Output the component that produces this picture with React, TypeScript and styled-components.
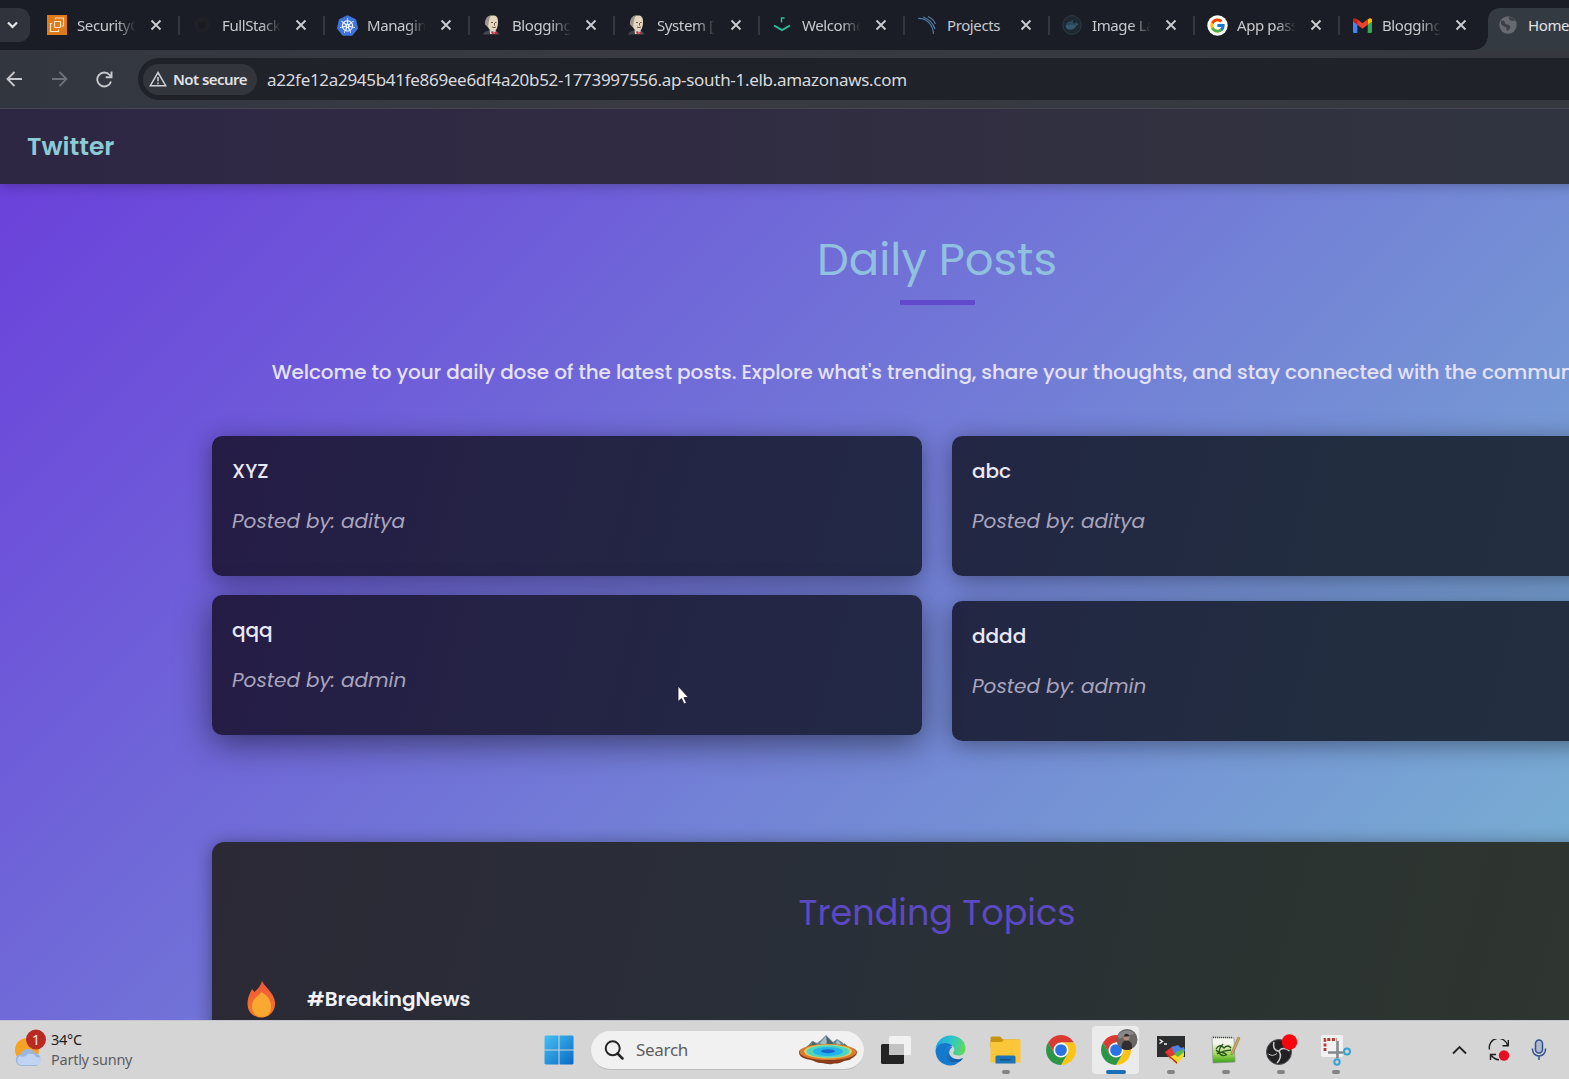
import React from 'react';
import styled, { createGlobalStyle, css } from 'styled-components';
import { FcGoogle } from 'react-icons/fc';
import { SiKubernetes, SiDocker } from 'react-icons/si';

const brandFont = `Poppins, Inter, "Noto Sans", sans-serif`;
const uiFont = `"Segoe UI", "Noto Sans", "Open Sans", sans-serif`;

const Global = createGlobalStyle`
  * { box-sizing: border-box; }
  html, body { margin: 0; padding: 0; overflow: hidden; background: #1a1d24; }
  svg { display: block; flex: none; }
`;

const Screen = styled.div`
  width: 1569px;
  height: 1079px;
  display: flex;
  flex-direction: column;
  overflow: hidden;
  position: relative;
  font-family: ${uiFont};
`;

/* ---------- browser chrome ---------- */

const TabStrip = styled.div`
  height: 50px;
  flex: none;
  display: flex;
  background: #1a1d25;
  padding-top: 8px;
`;

const TabSearch = styled.div`
  width: 30px;
  height: 34px;
  margin-right: 5px;
  padding-right: 5px;
  border-radius: 0 11px 11px 0;
  background: #30333b;
  display: flex;
  align-items: center;
  justify-content: center;
  flex: none;
`;

const Tab = styled.div<{ $active?: boolean }>`
  width: 145px;
  height: 34px;
  flex: none;
  display: flex;
  align-items: center;
  padding-left: 11px;
  font-size: 15px;
  letter-spacing: -0.4px;
  color: #c9cacd;
  ${(p) =>
    p.$active &&
    css`
      position: relative;
      height: 42px;
      width: 150px;
      margin-left: 3px;
      padding: 0 0 8px 9px;
      border-radius: 12px 0 0 0;
      background: #343a42;
      color: #e2e3e5;
      &::before {
        content: '';
        position: absolute;
        left: -14px;
        bottom: 0;
        width: 14px;
        height: 14px;
        background: radial-gradient(circle at 0 0, transparent 13.5px, #343a42 14px);
      }
    `}
`;

const TabIcon = styled.div`
  width: 22px;
  height: 22px;
  margin-right: 9px;
  display: flex;
  align-items: center;
  justify-content: center;
  flex: none;
`;

const TabLabel = styled.div<{ $fade?: boolean }>`
  width: 58px;
  height: 26px;
  line-height: 26px;
  overflow: hidden;
  white-space: nowrap;
  ${(p) =>
    p.$fade &&
    css`
      mask-image: linear-gradient(90deg, #000 68%, transparent 102%);
    `}
`;

const TabClose = styled.div`
  margin-left: 15px;
  width: 12px;
`;

const TabDivider = styled.div`
  width: 2px;
  height: 19px;
  margin-left: auto;
  background: #34373e;
`;

const Toolbar = styled.div`
  height: 59px;
  flex: none;
  display: flex;
  align-items: center;
  background: linear-gradient(90deg, #32373f, #393a42 40%, #35383f);
  border-bottom: 1px solid #47454f;
`;

const NavIcons = styled.div`
  width: 138px;
  padding: 0 25px 0 6px;
  display: flex;
  justify-content: space-between;
  align-items: center;
`;

const AddressBar = styled.div`
  flex: 1;
  height: 42px;
  display: flex;
  align-items: center;
  padding-left: 5px;
  border-radius: 21px 0 0 21px;
  background: #1f2229;
`;

const SecurityChip = styled.div`
  width: 114px;
  height: 31px;
  border-radius: 16px;
  background: #32353c;
  display: flex;
  align-items: center;
  padding-left: 6px;
  gap: 6px;
  color: #e0e1e4;
  font-size: 15px;
  font-weight: 600;
  letter-spacing: -0.55px;
  white-space: nowrap;
`;

const Url = styled.div`
  margin-left: 10px;
  color: #d9dadd;
  font-size: 17px;
  letter-spacing: -0.3px;
  white-space: nowrap;
`;

/* ---------- site ---------- */

const Viewport = styled.div`
  flex: 1;
  min-height: 0;
  overflow: hidden;
  font-family: ${brandFont};
`;

const Site = styled.div`
  width: 1874px;
  height: 911px;
  display: flex;
  flex-direction: column;
`;

const SiteHeader = styled.header`
  height: 75px;
  flex: none;
  display: flex;
  align-items: center;
  padding-left: 27px;
  background: linear-gradient(90deg, #2e2744, #302a43 30%, #31313f 65%, #303843);
  color: #8ccbd5;
  font-size: 25px;
  font-weight: 600;
  box-shadow: 0 2px 12px rgba(0, 0, 0, 0.25);
  z-index: 1;
`;

const Content = styled.main`
  flex: 1;
  min-height: 0;
  display: flex;
  flex-direction: column;
  align-items: center;
  overflow: hidden;
  background: linear-gradient(135deg, #6b41db, #7bc4d1);
`;

const PageTitle = styled.h1`
  margin: 48px 0 0;
  height: 56px;
  flex: none;
  line-height: 56px;
  font-size: 45px;
  font-weight: 400;
  color: #91c1df;
`;

const TitleRule = styled.div`
  margin-top: 12px;
  width: 75px;
  height: 5px;
  flex: none;
  border-radius: 1px;
  background: #6149cb;
`;

const Intro = styled.p`
  margin: 52px 0 0;
  height: 30px;
  flex: none;
  line-height: 30px;
  font-size: 20px;
  font-weight: 500;
  letter-spacing: -0.11px;
  color: #e5e2fa;
  white-space: nowrap;
`;

const PostGrid = styled.div`
  margin-top: 49px;
  width: 1450px;
  flex: none;
  display: grid;
  grid-template-columns: 1fr 1fr;
  gap: 25px 30px;
`;

const PostCard = styled.article<{ $side: 'left' | 'right'; $raised?: boolean }>`
  height: 140px;
  padding: 20px;
  border-radius: 10px;
  background: ${(p) =>
    p.$side === 'left'
      ? 'linear-gradient(105deg, #251c46, #242345 45%, #222945)'
      : 'linear-gradient(105deg, #222644, #222c40 45%, #233040)'};
  box-shadow: 0 4px 25px rgba(0, 0, 0, 0.4);
  ${(p) =>
    p.$raised &&
    css`
      transform: translateY(-6px);
      box-shadow: 0 8px 34px rgba(0, 0, 0, 0.5);
    `}
`;

const PostTitle = styled.h3`
  margin: 0;
  height: 30px;
  line-height: 30px;
  font-size: 20px;
  font-weight: 500;
  color: #ebe8f6;
`;

const PostAuthor = styled.p`
  margin: 20px 0 0;
  height: 30px;
  line-height: 30px;
  font-size: 20px;
  font-style: italic;
  color: #a9a5bd;
`;

const TrendingPanel = styled.section`
  margin-top: 101px;
  width: 1450px;
  height: 300px;
  flex: none;
  padding: 46px 35px;
  border-radius: 12px;
  background: linear-gradient(105deg, #2b2935, #292f38 42%, #2b3331 70%, #303630);
  box-shadow: 0 2px 18px rgba(0, 0, 0, 0.4);
`;

const TrendingTitle = styled.h2`
  margin: 0;
  height: 50px;
  line-height: 50px;
  text-align: center;
  font-size: 35px;
  font-weight: 400;
  color: #5b49c4;
`;

const TrendingRow = styled.div`
  margin-top: 41px;
  height: 40px;
  display: flex;
  align-items: center;
  gap: 30px;
  font-size: 20px;
  font-weight: 600;
  color: #f1f1f6;
`;

const Pointer = styled.div`
  position: absolute;
  left: 677px;
  top: 685px;
`;

/* ---------- taskbar ---------- */

const Taskbar = styled.footer`
  height: 59px;
  flex: none;
  display: flex;
  align-items: center;
  background: #d5d5d6;
  border-top: 1px solid #c4c6ce;
`;

const Weather = styled.div`
  width: 531px;
  display: flex;
  align-items: center;
  padding: 0 0 2px 13px;
  gap: 4px;
`;

const WeatherText = styled.div`
  display: flex;
  flex-direction: column;
  font-size: 14.5px;
  line-height: 20px;
  letter-spacing: -0.25px;
  color: #1d1d1f;
`;

const Muted = styled.span`
  color: #5c5c5f;
`;

const Slot = styled.div<{ $state?: 'open' | 'active' }>`
  position: relative;
  width: 55px;
  height: 48px;
  display: flex;
  align-items: center;
  justify-content: center;
  flex: none;
  ${(p) =>
    p.$state === 'active' &&
    css`
      width: 47px;
      margin: 0 4px;
      background: #ebebec;
      border-radius: 4px;
    `}
  ${(p) =>
    p.$state &&
    css`
      &::after {
        content: '';
        position: absolute;
        bottom: 0;
        width: ${p.$state === 'active' ? 20 : 8}px;
        height: 4px;
        border-radius: 2px;
        background: ${p.$state === 'active' ? '#1b6fb8' : '#828384'};
      }
    `}
`;

const SearchBox = styled.div`
  width: 273px;
  height: 39px;
  margin: 0 4px 0 5px;
  border-radius: 20px;
  background: #f1f1f1;
  border-bottom: 1px solid #bcbcbd;
  display: flex;
  align-items: center;
  padding: 0 6px 0 13px;
  font-size: 17px;
  letter-spacing: -0.3px;
  color: #5e5e60;
  gap: 12px;
`;

const Grow = styled.span`
  flex: 1;
`;

const Tray = styled.div`
  margin-left: auto;
  width: 130px;
  display: flex;
  align-items: center;
  gap: 21px;
  padding-left: 13px;
`;

/* ---------- icons ---------- */

const AwsIcon = () => (
  <svg width="20" height="20" viewBox="0 0 20 20">
    <rect width="20" height="20" fill="#df7a18" />
    <g fill="none" stroke="#fbe3c4" strokeWidth="1.2">
      <rect x="7.5" y="6.5" width="6" height="6" rx="0.8" />
      <path d="M8.5 4.5V3h8v8h-2M5 8.500H3.500V16.500H11.500V14.500" />
    </g>
  </svg>
);

const GithubDim = () => (
  <svg width="20" height="20" viewBox="0 0 20 20">
    <circle cx="10" cy="10" r="8" fill="#1e2026" />
    <path d="M6 6l2 1h4l2-1v6c0 2-8 2-8 0z" fill="#191b21" />
  </svg>
);

const JenkinsIcon = () => (
  <svg width="20" height="22" viewBox="0 0 20 22">
    <path d="M1 20.500c1-3 4-4 8-4s8 1 8.500 4z" fill="#45424c" />
    <path d="M5 8c0-5 2.500-6.500 6-6.500S16 3 16 8c0 5.500-2 9.500-5 9.500S5 13 5 8z" fill="#e4d6bd" />
    <path d="M3 10.500C2.500 5 5.500 1.500 9.500 1.300 7 4 7.500 6 6.500 9L6 13.500z" fill="#9c968e" />
    <path d="M9 8.500h2M13 8.500h1.500M10 13q2 1.200 4 0M12.500 9v2.500" stroke="#5d4c43" strokeWidth="0.900" fill="none" />
    <path d="M7.500 15.500l3 2.500 3.500-2-1 4H8z" fill="#d8d3cf" />
    <path d="M9 17.500l3 1 3-1v3l-3-1-2 1z" fill="#b93049" />
  </svg>
);

const WelcomeIcon = () => (
  <svg width="20" height="20" viewBox="0 0 20 20" fill="none" stroke="#2bbf9b" strokeWidth="2">
    <path d="M2 10.500l8 4.500 8-4.500" />
    <path d="M9.500 7.500V3H12.500" strokeWidth="1.500" />
  </svg>
);

const SonarIcon = () => (
  <svg width="20" height="20" viewBox="0 0 20 20" fill="none" stroke="#4e7ba1" strokeWidth="1.2">
    <path d="M1 3.500C10 3 16 10 16.500 19M6 2C12 4 16 8 18 14M11 1.500c3 1.500 6 4 7.500 7.500" />
  </svg>
);

const DockerDim = () => (
  <svg width="20" height="20" viewBox="0 0 20 20">
    <circle cx="10" cy="10" r="9.300" fill="#1d2831" stroke="#293e4b" />
    <g color="#36586d" transform="translate(3.500 3.500)">
      <SiDocker size={13} />
    </g>
  </svg>
);

const GoogleIcon = () => (
  <svg width="21" height="21" viewBox="0 0 21 21">
    <circle cx="10.500" cy="10.500" r="10.200" fill="#fff" />
    <g transform="translate(2 2)">
      <FcGoogle size={17} />
    </g>
  </svg>
);

const GmailIcon = () => (
  <svg width="19" height="15" viewBox="0 0 19 15">
    <path d="M0 2.500L4.300 5.500V15H1.300A1.300 1.300 0 0 1 0 13.700z" fill="#4285f4" />
    <path d="M19 2.500L14.700 5.500V15h3a1.300 1.300 0 0 0 1.300-1.300z" fill="#34a853" />
    <path d="M14.700 1.200L17 .2c1-.3 2 .5 2 1.800v1.500l-4.300 3.300z" fill="#fbbc04" />
    <path d="M4.300 1.200L2 .2C1 0 0 .7 0 2v1.500l4.300 3.300z" fill="#c5221f" />
    <path d="M4.300 6.800V1.200L9.500 5.200l5.200-4v5.600L9.500 10.700z" fill="#ea4335" />
  </svg>
);

const GlobeIcon = () => (
  <svg width="20" height="20" viewBox="0 0 20 20">
    <circle cx="10" cy="10" r="8.700" fill="#666a70" />
    <path d="M3 6c3-1 4 0 4 2s4 1 5 3-1 4-3 5l-1-4c-2 0-4-2-5-3zM11 2c-1 3 2 4 6 4l-2-3z" fill="#3b4047" />
  </svg>
);

const K8sIcon = () => (
  <svg width="21" height="21" viewBox="0 0 21 21">
    <circle cx="10.500" cy="10.500" r="8" fill="#f2f5fd" />
    <g color="#3f74dc">
      <SiKubernetes size={21} />
    </g>
  </svg>
);

const CloseGlyph = () => (
  <svg width="12" height="12" viewBox="0 0 12 12" stroke="#c9cbcf" strokeWidth="1.900">
    <path d="M1.500 1.500l9 9M10.500 1.500l-9 9" />
  </svg>
);

const Arrow = ({ color, flip }: { color: string; flip?: boolean }) => (
  <svg width="17" height="16" viewBox="0 0 17 16" fill="none" stroke={color} strokeWidth="1.800">
    <path d={flip ? 'M1 8h14M8.500 1l7 7-7 7' : 'M16 8H2M8.500 1l-7 7 7 7'} />
  </svg>
);

const Reload = () => (
  <svg width="17" height="17" viewBox="0 0 17 17" fill="none" stroke="#c6c8cc" strokeWidth="1.900">
    <path d="M15 10.500A7 7 0 1 1 13.700 4L15.500 6" />
    <path d="M15.500 .5V6.300H9.700" />
  </svg>
);

const Warning = () => (
  <svg width="18" height="16" viewBox="0 0 18 16" fill="none" stroke="#d0d2d6" strokeWidth="1.500">
    <path d="M9 1.500L16.700 14.700H1.300z" />
    <path d="M9 6v4.300M9 11.500v1.700" />
  </svg>
);

const Flame = () => (
  <svg width="30" height="38" viewBox="0 0 30 38">
    <defs>
      <linearGradient id="flame" x1="0" y1="0" x2="0" y2="1">
        <stop offset="0" stopColor="#f0553a" />
        <stop offset="1" stopColor="#f47b26" />
      </linearGradient>
    </defs>
    <path d="M15 .5c1 5 12.500 12 13 22C28.500 32 21.500 37.500 14.500 37.500S.5 33 .5 23.500c0-5 1.500-9 4.500-14.500l2.500 3C10.500 9 14 6 15 .5z" fill="url(#flame)" />
    <path d="M14.500 12c5 3 9.500 7 9.500 14.500S20 37 14.500 37 5 33 5 26s5.500-9 9.500-14z" fill="#f9a832" />
  </svg>
);

const WeatherIcon = () => (
  <svg width="34" height="40" viewBox="0 0 34 40">
    <circle cx="14" cy="21" r="12" fill="#f5a325" />
    <path d="M8 37a6 6 0 0 1-.5-11.800A8 8 0 0 1 22 24a6.700 6.700 0 0 1 1 13z" fill="#9db6de" />
    <path d="M7 36a5 5 0 0 1 0-9q5 2 8-2 6-1 8 3 4 0 6 3-1 5-6 5z" fill="#c0d3f1" />
    <circle cx="23" cy="10.500" r="10" fill="#b92a24" />
    <text x="23" y="15.500" textAnchor="middle" fontSize="14" fill="#f8e4e2" fontFamily="Noto Sans, sans-serif">1</text>
  </svg>
);

const StartIcon = () => (
  <svg width="30" height="30" viewBox="0 0 30 30">
    <defs>
      <linearGradient id="win" x1="0" y1="0" x2="1" y2="1">
        <stop offset="0" stopColor="#45c1f3" />
        <stop offset="1" stopColor="#0a69c3" />
      </linearGradient>
    </defs>
    <path d="M1.500 .5h13v14h-14V1.500zM15.500 .5h13l1 1v13h-14zM.5 15.500h14v14H1.500l-1-1zM15.500 15.500h14v13l-1 1h-13z" fill="url(#win)" />
  </svg>
);

const SearchIcon = () => (
  <svg width="20" height="20" viewBox="0 0 20 20" fill="none" stroke="#252527" strokeWidth="2">
    <circle cx="8.700" cy="8.300" r="7" />
    <path d="M13.500 13.500l5 5" strokeWidth="2.500" strokeLinecap="round" />
  </svg>
);

const SpringIcon = () => (
  <svg width="60" height="30" viewBox="0 0 60 30">
    <path d="M9 13l5-7 5 2 4-3 5-5 7 7 4-3 5 3 6 7z" fill="#6b8790" />
    <path d="M22 8l6-7 3 5-3 2-1 5zM38 7l2-2 3 4-4 2z" fill="#a5bac2" />
    <path d="M28 1l7 7-2 4-4-4zM15 6l3 3-1 4-4-2z" fill="#47646f" />
    <path d="M8 12l5-4v5zM46 8l6 5h-8z" fill="#5f7d50" />
    <path d="M1 17c0-9 58-9 58 0 0 4-4 5-6 7s-6 1-9 3-7 1-10 2-7-1-11-1-6-2-10-3C6 24 1 22 1 17z" fill="#8a3d1a" />
    <ellipse cx="30" cy="17" rx="28.500" ry="8" fill="#de7a2c" />
    <ellipse cx="30" cy="16.500" rx="24" ry="7" fill="#d8cd6a" />
    <ellipse cx="30" cy="16.500" rx="21.500" ry="6.200" fill="#4fd8bd" />
    <ellipse cx="30" cy="16.500" rx="15" ry="4.500" fill="#25b4ea" />
    <ellipse cx="30" cy="16.200" rx="7" ry="2" fill="#1668cf" />
  </svg>
);

const TaskView = () => (
  <svg width="30" height="30" viewBox="0 0 30 30">
    <rect x="0" y="9" width="23" height="20" rx="1.500" fill="#242425" />
    <rect x="8" y="1" width="22" height="19" rx="1.500" fill="#f1f1f1" />
    <rect x="8" y="9" width="15" height="11" fill="#c3c3c4" />
  </svg>
);

const EdgeIcon = () => (
  <svg width="31" height="31" viewBox="0 0 31 31">
    <defs>
      <linearGradient id="edgeTop" x1="0" y1="0.300" x2="1" y2="0.500">
        <stop offset="0" stopColor="#1fa6e0" />
        <stop offset="0.500" stopColor="#2cc5cb" />
        <stop offset="1" stopColor="#61d95c" />
      </linearGradient>
      <linearGradient id="edgeLow" x1="0" y1="0" x2="1" y2="1">
        <stop offset="0" stopColor="#1b86d6" />
        <stop offset="1" stopColor="#0d4f9c" />
      </linearGradient>
    </defs>
    <path d="M.5 14C1.500 6 8 .5 15.500 .5 24 .5 30.500 6 30.500 13.500c0 4.500-3 7-7 7-3.500 0-5.500-1-5.500-2.500 0-1 1.300-1.500 1.300-3.500 0-3.500-4-6-8.300-6C6 8.500 2 10.500.5 14z" fill="url(#edgeTop)" />
    <path d="M.5 15.500C1 11 5 8 10 8c3.500 0 6 1.200 7.500 3-5 0-7 3.500-7 7 0 6.500 6 11.500 13.500 9-2.500 2.500-5.500 3.500-8.500 3.500C7 30.500.5 24 .5 15.500z" fill="#1479cc" />
    <path d="M14.500 11.200c-4 1-5.500 5.300-4 10 2 6 9 8 14 5.500 1.500-.8 3-2.500 3.700-4-3 2-8 2-11-.2-3.200-2.500-3.700-5.500-2.200-8 .8-1.300 1.700-2 2.500-2.500-1-.7-2-.9-3-.8z" fill="url(#edgeLow)" />
  </svg>
);

const FolderIcon = () => (
  <svg width="31" height="28" viewBox="0 0 31 28">
    <path d="M.5 2A1.500 1.500 0 0 1 2 .5h8l3 3h17v8H.5z" fill="#c9930f" />
    <path d="M.5 6h11l3-2.500h16v23H.5z" fill="#fbc738" />
    <path d="M5.500 27.500V21a1.500 1.500 0 0 1 1.500-1.500h17a1.500 1.500 0 0 1 1.500 1.500v6.500z" fill="#1e72b6" />
    <rect x="10" y="23" width="11" height="1.500" fill="#155588" />
  </svg>
);

const ChromeShape = () => (
  <>
    <path d="M24 12H44.780A24 24 0 0 0 3.215 12L13.608 30z" fill="#da3a31" />
    <path d="M34.390 30L24 48A24 24 0 0 0 44.780 12H24z" fill="#fbc415" />
    <path d="M13.610 30L3.218 12A24 24 0 0 0 24 48L34.390 30z" fill="#2c9548" />
    <circle cx="24" cy="24" r="12" fill="#fff" />
    <circle cx="24" cy="24" r="9.400" fill="#2b72e4" />
  </>
);

const ChromeIcon = () => (
  <svg width="30" height="30" viewBox="0 0 48 48">
    <ChromeShape />
  </svg>
);

const ChromeProfileIcon = () => (
  <svg width="44" height="46" viewBox="0 0 44 46">
    <g transform="translate(7 8) scale(.625)">
      <ChromeShape />
    </g>
    <circle cx="33" cy="12.500" r="10.500" fill="#696664" />
    <path d="M23.500 9c3-6 13-8 17-2l-5 1-2 5-4-3-4 2z" fill="#878887" />
    <path d="M27.500 21.500c0-6 2-8 5-8s6 2 5.500 8c-3 2-7 2-10.500 0z" fill="#302c2f" />
    <circle cx="32.500" cy="10.500" r="3" fill="#b48c7c" />
    <path d="M29.500 9.500q2-5 6-1l-1 1z" fill="#28262a" />
  </svg>
);

const TerminalIcon = () => (
  <svg width="30" height="30" viewBox="0 0 30 30">
    <rect x="1" y="1" width="28" height="21" fill="#2c2d2f" />
    <path d="M3.500 4.500l3 2-3 2M8 9h3" stroke="#f2f2f2" strokeWidth="1.400" fill="none" />
    <path d="M9 17l8-6 3 4-2 6-4 3z" fill="#e5372c" />
    <path d="M16 12l6-2 3 3 3-1 1 4-8 4-4-3z" fill="#4a82e8" />
    <path d="M20 17l8-3v5l-6 5-5-3z" fill="#58b947" />
    <path d="M13 22l6-2 3 2 6-5v4l-7 8z" fill="#f5d929" />
    <path d="M9 17l12 10v2L10 19z" fill="#b6261e" />
  </svg>
);

const NotepadIcon = () => (
  <svg width="30" height="30" viewBox="0 0 30 30">
    <defs>
      <linearGradient id="pad" x1="0" y1="0" x2="0" y2="1">
        <stop offset="0.250" stopColor="#f3f4ee" />
        <stop offset="0.650" stopColor="#a5d85a" />
        <stop offset="1" stopColor="#35a016" />
      </linearGradient>
    </defs>
    <path d="M1 2l22 1 1 24-22 1z" fill="url(#pad)" stroke="#88908a" strokeWidth="0.700" />
    <path d="M2 2.500h20" stroke="#474b49" strokeDasharray="1 1" strokeWidth="1.500" />
    <g fill="none" stroke="#28551e" strokeWidth="1.300">
      <path d="M5 14q4-6 8-1 4-4 7 0M5 15q3 4 8 1l7-1M6 19q5-4 10 1M12 9q-4 4-4 9 3 4 7 2" />
    </g>
    <path d="M20 18L27 2l2 1-7 16-2 1z" fill="#d3a75c" stroke="#806434" strokeWidth="0.500" />
  </svg>
);

const ObsIcon = () => (
  <svg width="33" height="34" viewBox="0 0 33 34">
    <circle cx="15" cy="19" r="12.500" fill="#212123" stroke="#505052" />
    <g fill="none" stroke="#c8c8c9" strokeWidth="1.500">
      <path d="M10 9c-1.500 5 0 8 5 9.500M15 18.500c1.500-3.500 6-4.500 10.500-.5M15 18.500c3 3.500 1 8.500-2 11.500" />
      <path d="M4.500 21q4 3 8.500-.5" strokeWidth="1" />
    </g>
    <circle cx="25.500" cy="9" r="7.700" fill="#f7050f" />
  </svg>
);

const SnipIcon = () => (
  <svg width="32" height="32" viewBox="0 0 32 32">
    <rect x="1" y="1" width="22" height="22" rx="2" fill="#f2f1f1" />
    <path d="M5 17V5.500H17" fill="none" stroke="#b23a31" strokeWidth="2.800" strokeDasharray="3 1.600" />
    <path d="M17.500 7v17M8 18.500h15" stroke="#85898c" strokeWidth="2.600" />
    <circle cx="27" cy="17.500" r="3" fill="none" stroke="#36a3d1" strokeWidth="2" />
    <circle cx="17" cy="28" r="2.700" fill="none" stroke="#36a3d1" strokeWidth="2" />
  </svg>
);

const ChevronUp = () => (
  <svg width="15" height="10" viewBox="0 0 15 10" fill="none" stroke="#252527" strokeWidth="1.900">
    <path d="M1 8.500L7.500 2 14 8.500" />
  </svg>
);

const SyncIcon = () => (
  <svg width="22" height="22" viewBox="0 0 22 22" fill="none" stroke="#202022" strokeWidth="1.400">
    <path d="M1.500 10.500A9 9 0 0 1 19.500 6.500M20.300 1v5.700H14.500" />
    <path d="M2.500 21v-5.500H8M2.500 15.500Q6 20.500 11 20.800" />
    <circle cx="16" cy="16.500" r="5.200" fill="#e80e21" stroke="none" />
  </svg>
);

const MicIcon = () => (
  <svg width="16" height="22" viewBox="0 0 16 22" fill="none" stroke="#32518f" strokeWidth="1.500">
    <rect x="4.500" y="1" width="7" height="13" rx="3.500" fill="#aebad1" />
    <path d="M1.500 9.500v1a6.500 6.500 0 0 0 13 0v-1M8 17v4" />
  </svg>
);

/* ---------- data ---------- */

const tabs: { label: string; icon: React.ReactNode; fade?: boolean }[] = [
  { label: 'SecurityG', icon: <AwsIcon />, fade: true },
  { label: 'FullStack', icon: <GithubDim />, fade: true },
  { label: 'Managin', icon: <K8sIcon />, fade: true },
  { label: 'Blogging', icon: <JenkinsIcon />, fade: true },
  { label: 'System [', icon: <JenkinsIcon />, fade: true },
  { label: 'Welcome', icon: <WelcomeIcon />, fade: true },
  { label: 'Projects', icon: <SonarIcon /> },
  { label: 'Image La', icon: <DockerDim />, fade: true },
  { label: 'App pass', icon: <GoogleIcon />, fade: true },
  { label: 'Blogging', icon: <GmailIcon />, fade: true },
];

const posts: { title: string; author: string; side: 'left' | 'right'; raised?: boolean }[] = [
  { title: 'XYZ', author: 'aditya', side: 'left' },
  { title: 'abc', author: 'aditya', side: 'right' },
  { title: 'qqq', author: 'admin', side: 'left', raised: true },
  { title: 'dddd', author: 'admin', side: 'right' },
];

export default function App() {
  return (
    <Screen>
      <Global />
      <TabStrip>
        <TabSearch>
          <svg width="11" height="8" viewBox="0 0 11 8" fill="none" stroke="#e4e6ea" strokeWidth="2.200">
            <path d="M1 1.500l4.500 4.500L10 1.500" />
          </svg>
        </TabSearch>
        {tabs.map((tab, i) => (
          <Tab key={i}>
            <TabIcon>{tab.icon}</TabIcon>
            <TabLabel $fade={tab.fade}>{tab.label}</TabLabel>
            <TabClose>
              <CloseGlyph />
            </TabClose>
            {i < tabs.length - 1 && <TabDivider />}
          </Tab>
        ))}
        <Tab $active>
          <TabIcon>
            <GlobeIcon />
          </TabIcon>
          <TabLabel>Home</TabLabel>
        </Tab>
      </TabStrip>
      <Toolbar>
        <NavIcons>
          <Arrow color="#c6c8cc" />
          <Arrow color="#6d7178" flip />
          <Reload />
        </NavIcons>
        <AddressBar>
          <SecurityChip>
            <Warning />
            Not secure
          </SecurityChip>
          <Url>a22fe12a2945b41fe869ee6df4a20b52-1773997556.ap-south-1.elb.amazonaws.com</Url>
        </AddressBar>
      </Toolbar>
      <Viewport>
        <Site>
          <SiteHeader>Twitter</SiteHeader>
          <Content>
            <PageTitle>Daily Posts</PageTitle>
            <TitleRule />
            <Intro>
              Welcome to your daily dose of the latest posts. Explore what's trending, share your thoughts, and stay
              connected with the community.
            </Intro>
            <PostGrid>
              {posts.map((post) => (
                <PostCard key={post.title} $side={post.side} $raised={post.raised}>
                  <PostTitle>{post.title}</PostTitle>
                  <PostAuthor>Posted by: {post.author}</PostAuthor>
                </PostCard>
              ))}
            </PostGrid>
            <TrendingPanel>
              <TrendingTitle>Trending Topics</TrendingTitle>
              <TrendingRow>
                <Flame />
                #BreakingNews
              </TrendingRow>
            </TrendingPanel>
          </Content>
        </Site>
      </Viewport>
      <Taskbar>
        <Weather>
          <WeatherIcon />
          <WeatherText>
            34°C
            <Muted>Partly sunny</Muted>
          </WeatherText>
        </Weather>
        <Slot>
          <StartIcon />
        </Slot>
        <SearchBox>
          <SearchIcon />
          <Grow>Search</Grow>
          <SpringIcon />
        </SearchBox>
        <Slot>
          <TaskView />
        </Slot>
        <Slot>
          <EdgeIcon />
        </Slot>
        <Slot $state="open">
          <FolderIcon />
        </Slot>
        <Slot>
          <ChromeIcon />
        </Slot>
        <Slot $state="active">
          <ChromeProfileIcon />
        </Slot>
        <Slot $state="open">
          <TerminalIcon />
        </Slot>
        <Slot $state="open">
          <NotepadIcon />
        </Slot>
        <Slot $state="open">
          <ObsIcon />
        </Slot>
        <Slot $state="open">
          <SnipIcon />
        </Slot>
        <Tray>
          <ChevronUp />
          <SyncIcon />
          <MicIcon />
        </Tray>
      </Taskbar>
      <Pointer>
        <svg width="13" height="20" viewBox="0 0 13 20">
          <path d="M1 1v15.500l3.500-3 2.500 5.500 2.500-1-2.500-5.500h4.500z" fill="#fff" stroke="#15162b" strokeWidth="0.800" />
        </svg>
      </Pointer>
    </Screen>
  );
}
